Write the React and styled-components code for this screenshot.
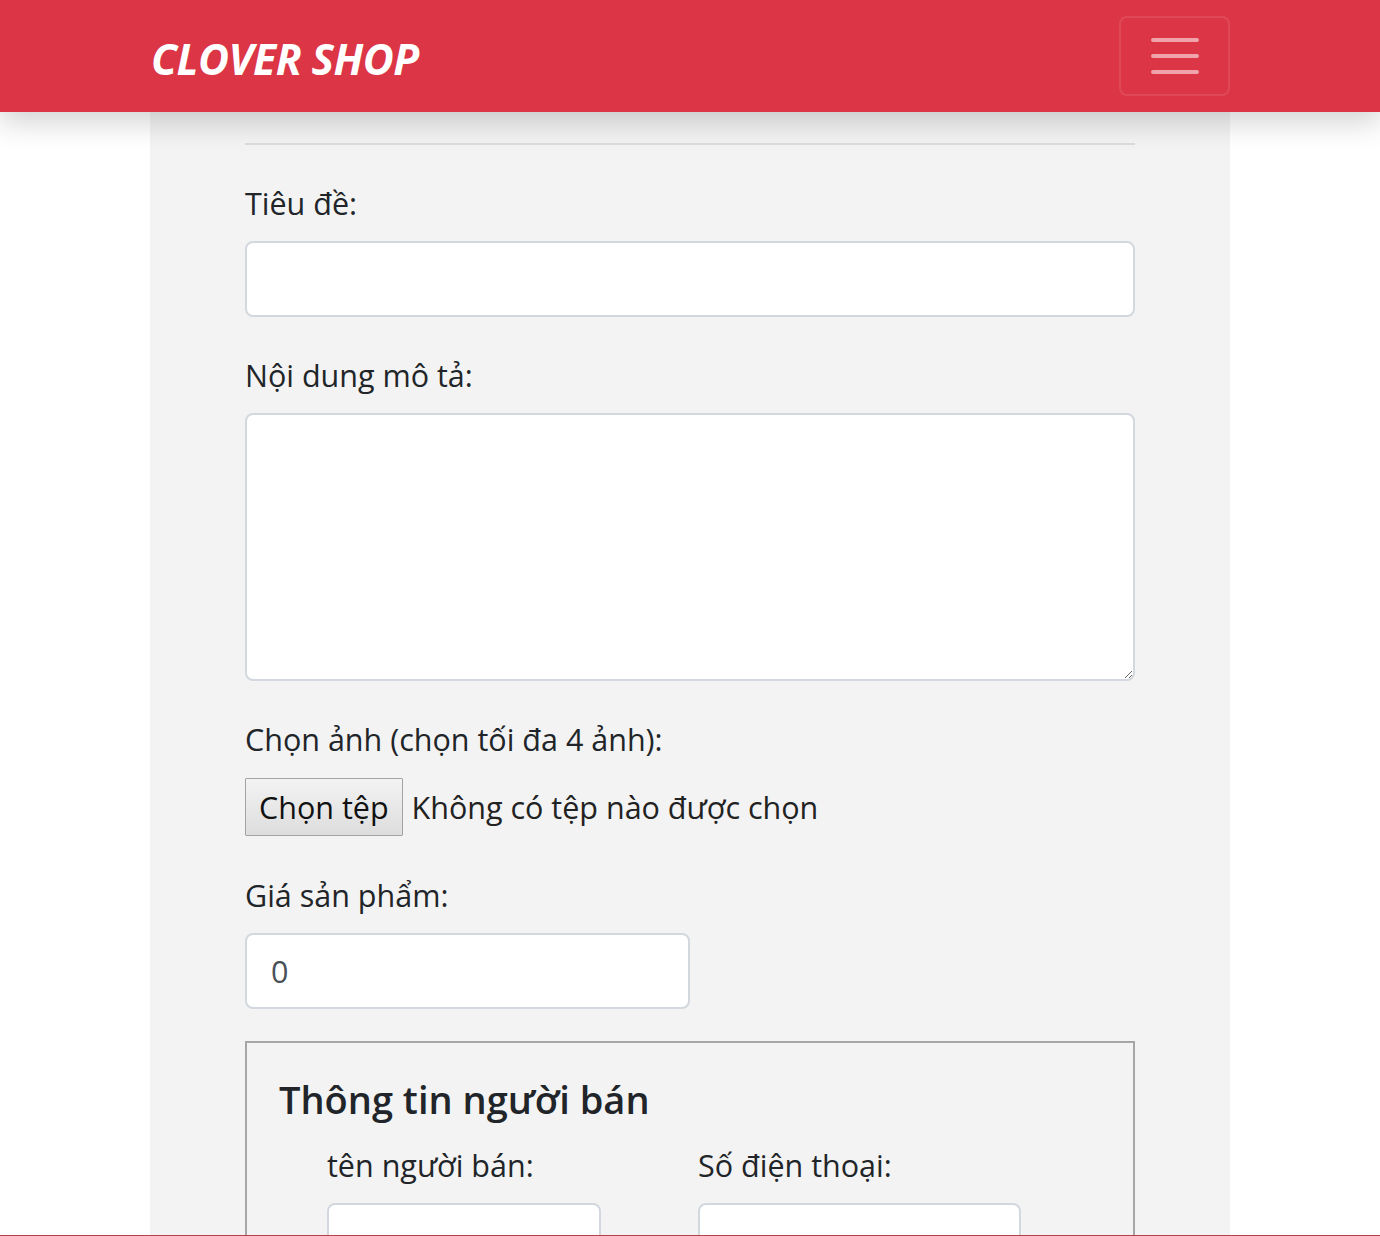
import styled, { createGlobalStyle } from "styled-components";

const GlobalStyle = createGlobalStyle`
  * { box-sizing: border-box; }
  html, body { margin: 0; padding: 0; background: #fff; }
  body {
    font-family: "Open Sans", "Noto Sans", sans-serif;
    color: #212529;
    overflow: hidden;
  }
`;

const Page = styled.div`
  min-height: 1236px;
  display: flex;
  flex-direction: column;
`;

const Navbar = styled.nav`
  position: relative;
  z-index: 2;
  height: 112px;
  background: #dc3545;
  box-shadow: 0 10px 28px rgba(0, 0, 0, 0.18);
`;

const NavInner = styled.div`
  width: 1080px;
  height: 100%;
  margin: 0 auto;
  display: flex;
  align-items: center;
  justify-content: space-between;
`;

const Brand = styled.a`
  color: #fff;
  font-family: "Open Sans", sans-serif;
  font-weight: 700;
  font-style: italic;
  font-size: 42.5px;
  letter-spacing: -0.5px;
  text-decoration: none;
  padding-top: 4px;
  margin-left: 1px;
`;

const Toggler = styled.button`
  width: 111px;
  height: 80px;
  margin-top: -1px;
  background: transparent;
  border: 2px solid rgba(255, 255, 255, 0.1);
  border-radius: 8px;
  display: flex;
  align-items: center;
  justify-content: center;
  padding: 0;
`;

const Main = styled.main`
  flex: 1;
  width: 1080px;
  margin: 0 auto;
  background: #f3f3f3;
  padding: 31px 95px 0;
`;

const Rule = styled.hr`
  margin: 0 0 32px;
  border: 0;
  border-top: 2px solid #dcdcdc;
`;

const FormGroup = styled.div`
  margin-bottom: 32px;
`;

const Label = styled.label`
  display: block;
  font-size: 30.5px;
  line-height: 48px;
  padding-top: 2px;
  margin-bottom: 14px;
  color: #212529;
`;

const Input = styled.input`
  display: block;
  width: ${({ $w }) => $w || "100%"};
  height: 76px;
  padding: 0 24px;
  font-family: inherit;
  font-size: 30.5px;
  color: #495057;
  background: #fff;
  border: 2px solid #d3d8de;
  border-radius: 8px;
  outline: none;
`;

const TextArea = styled.textarea`
  display: block;
  width: 100%;
  height: 268px;
  padding: 12px 24px;
  font-family: inherit;
  font-size: 30.5px;
  color: #495057;
  background: #fff;
  border: 2px solid #d3d8de;
  border-radius: 8px;
  outline: none;
  resize: vertical;
`;

const FileRow = styled.div`
  display: flex;
  align-items: center;
  gap: 9px;
  height: 60px;
`;

const FileButton = styled.button`
  height: 58px;
  padding: 0 13px;
  font-family: inherit;
  font-size: 30.5px;
  color: #111;
  background: linear-gradient(#f3f3f3, #dddddd);
  border: 1px solid #a3a3a3;
  border-radius: 1px;
`;

const FileText = styled.span`
  font-size: 30.5px;
  color: #222;
`;

const Fieldset = styled.fieldset`
  margin: 0;
  padding: 32px 32px 0;
  border: 2px solid #a6a6a6;
  border-bottom: none;
  min-width: 0;
`;

const Legend = styled.legend`
  float: left;
  width: 100%;
  padding: 0;
  margin: 0 0 16px;
  font-size: 38px;
  font-weight: 600;
  line-height: 48px;
  color: #212529;
`;

const SellerRow = styled.div`
  clear: both;
  display: grid;
  grid-template-columns: 371px 1fr;
  padding-left: 48px;
`;

const BottomLine = styled.div`
  position: fixed;
  left: 0;
  right: 0;
  bottom: 0;
  height: 1px;
  background: #b3404b;
`;

function Hamburger() {
  return (
    <svg width="60" height="60" viewBox="0 0 30 30">
      <path
        stroke="rgba(255,255,255,0.55)"
        strokeLinecap="round"
        strokeWidth="2"
        d="M4 7h22M4 15h22M4 23h22"
      />
    </svg>
  );
}

export default function App() {
  return (
    <Page>
      <GlobalStyle />
      <Navbar>
        <NavInner>
          <Brand href="#">CLOVER SHOP</Brand>
          <Toggler aria-label="Menu">
            <Hamburger />
          </Toggler>
        </NavInner>
      </Navbar>

      <Main>
        <Rule />

        <FormGroup>
          <Label htmlFor="tieu-de">Tiêu đề:</Label>
          <Input id="tieu-de" type="text" />
        </FormGroup>

        <FormGroup>
          <Label htmlFor="mo-ta">Nội dung mô tả:</Label>
          <TextArea id="mo-ta" />
        </FormGroup>

        <FormGroup>
          <Label htmlFor="anh">Chọn ảnh (chọn tối đa 4 ảnh):</Label>
          <FileRow>
            <FileButton type="button">Chọn tệp</FileButton>
            <FileText>Không có tệp nào được chọn</FileText>
          </FileRow>
        </FormGroup>

        <FormGroup>
          <Label htmlFor="gia">Giá sản phẩm:</Label>
          <Input id="gia" type="number" defaultValue="0" $w="445px" />
        </FormGroup>

        <Fieldset>
          <Legend>Thông tin người bán</Legend>
          <SellerRow>
            <div>
              <Label htmlFor="ten">tên người bán:</Label>
              <Input id="ten" type="text" $w="274px" />
            </div>
            <div>
              <Label htmlFor="sdt">Số điện thoại:</Label>
              <Input id="sdt" type="text" $w="323px" />
            </div>
          </SellerRow>
        </Fieldset>
      </Main>
      <BottomLine />
    </Page>
  );
}
